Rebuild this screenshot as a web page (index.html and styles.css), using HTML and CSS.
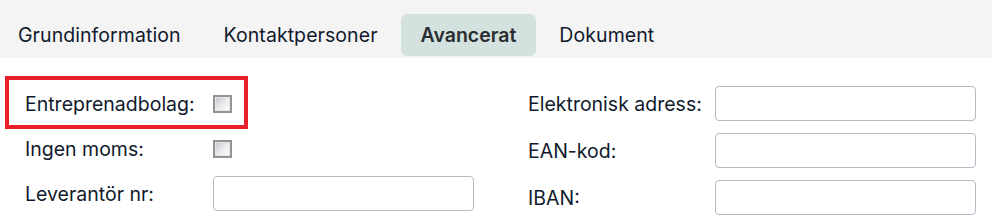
FILE: index.html
```html
<!DOCTYPE html>
<html lang="sv">
<head>
<meta charset="utf-8">
<link rel="stylesheet" href="styles.css">
</head>
<body>
<nav class="tabs">
  <span class="tab">Grundinformation</span>
  <span class="tab">Kontaktpersoner</span>
  <span class="tab active">Avancerat</span>
  <span class="tab">Dokument</span>
</nav>
<main class="form">
  <section class="col left">
    <div class="row highlight">
      <label class="lbl">Entreprenadbolag:</label>
      <span class="check"></span>
    </div>
    <div class="row">
      <label class="lbl">Ingen moms:</label>
      <span class="check"></span>
    </div>
    <div class="row">
      <label class="lbl">Leverantör nr:</label>
      <span class="input"></span>
    </div>
  </section>
  <section class="col right">
    <div class="row">
      <label class="lbl">Elektronisk adress:</label>
      <span class="input"></span>
    </div>
    <div class="row">
      <label class="lbl">EAN-kod:</label>
      <span class="input"></span>
    </div>
    <div class="row">
      <label class="lbl">IBAN:</label>
      <span class="input"></span>
    </div>
  </section>
</main>
</body>
</html>
```
FILE: styles.css
```css
*, *::before, *::after { box-sizing: border-box; }
html, body { margin: 0; padding: 0; background: #fff; }
body {
  font-family: Inter, "Noto Sans", sans-serif;
  font-size: 19.5px;
  color: #111a2c;
  width: 992px;
  height: 222px;
  overflow: hidden;
}
.tabs {
  display: flex;
  align-items: center;
  height: 58px;
  background: #f4f4f4;
  padding: 14px 0 2px 0;
}
.tab {
  display: flex;
  align-items: center;
  height: 42px;
  padding: 0 20px;
  margin-right: 3px;
  border-radius: 6px;
  letter-spacing: 0.07px;
}
.tab:first-child { margin-left: -2px; }
.tab.active {
  background: #d3e1df;
  color: #2a2d30;
  font-weight: 600;
  letter-spacing: 0;
}
.form {
  display: flex;
  padding-top: 28px;
}
.col {
  display: flex;
  flex-direction: column;
}
.left { width: 528px; padding-left: 25px; gap: 10px; }
.right { gap: 12px; }
.row {
  display: flex;
  align-items: center;
  height: 35px;
}
.lbl { width: 188px; }
.right .lbl { width: 187px; }
.highlight {
  position: relative;
}
.highlight::before {
  content: "";
  position: absolute;
  left: -20px;
  top: -10px;
  width: 243px;
  height: 53px;
  border: 4px solid #e8202a;
}
.check {
  width: 19px;
  height: 18px;
  border: 2px solid #939393;
  background: linear-gradient(135deg, #c4c4c8 0%, #ededf0 55%, #ffffff 100%);
  box-shadow: inset 0 0 0 1px #e6e6ea;
}
.input {
  width: 261px;
  height: 35px;
  border: 1px solid #b8b8c6;
  border-radius: 4px;
  background: #fff;
}
```
